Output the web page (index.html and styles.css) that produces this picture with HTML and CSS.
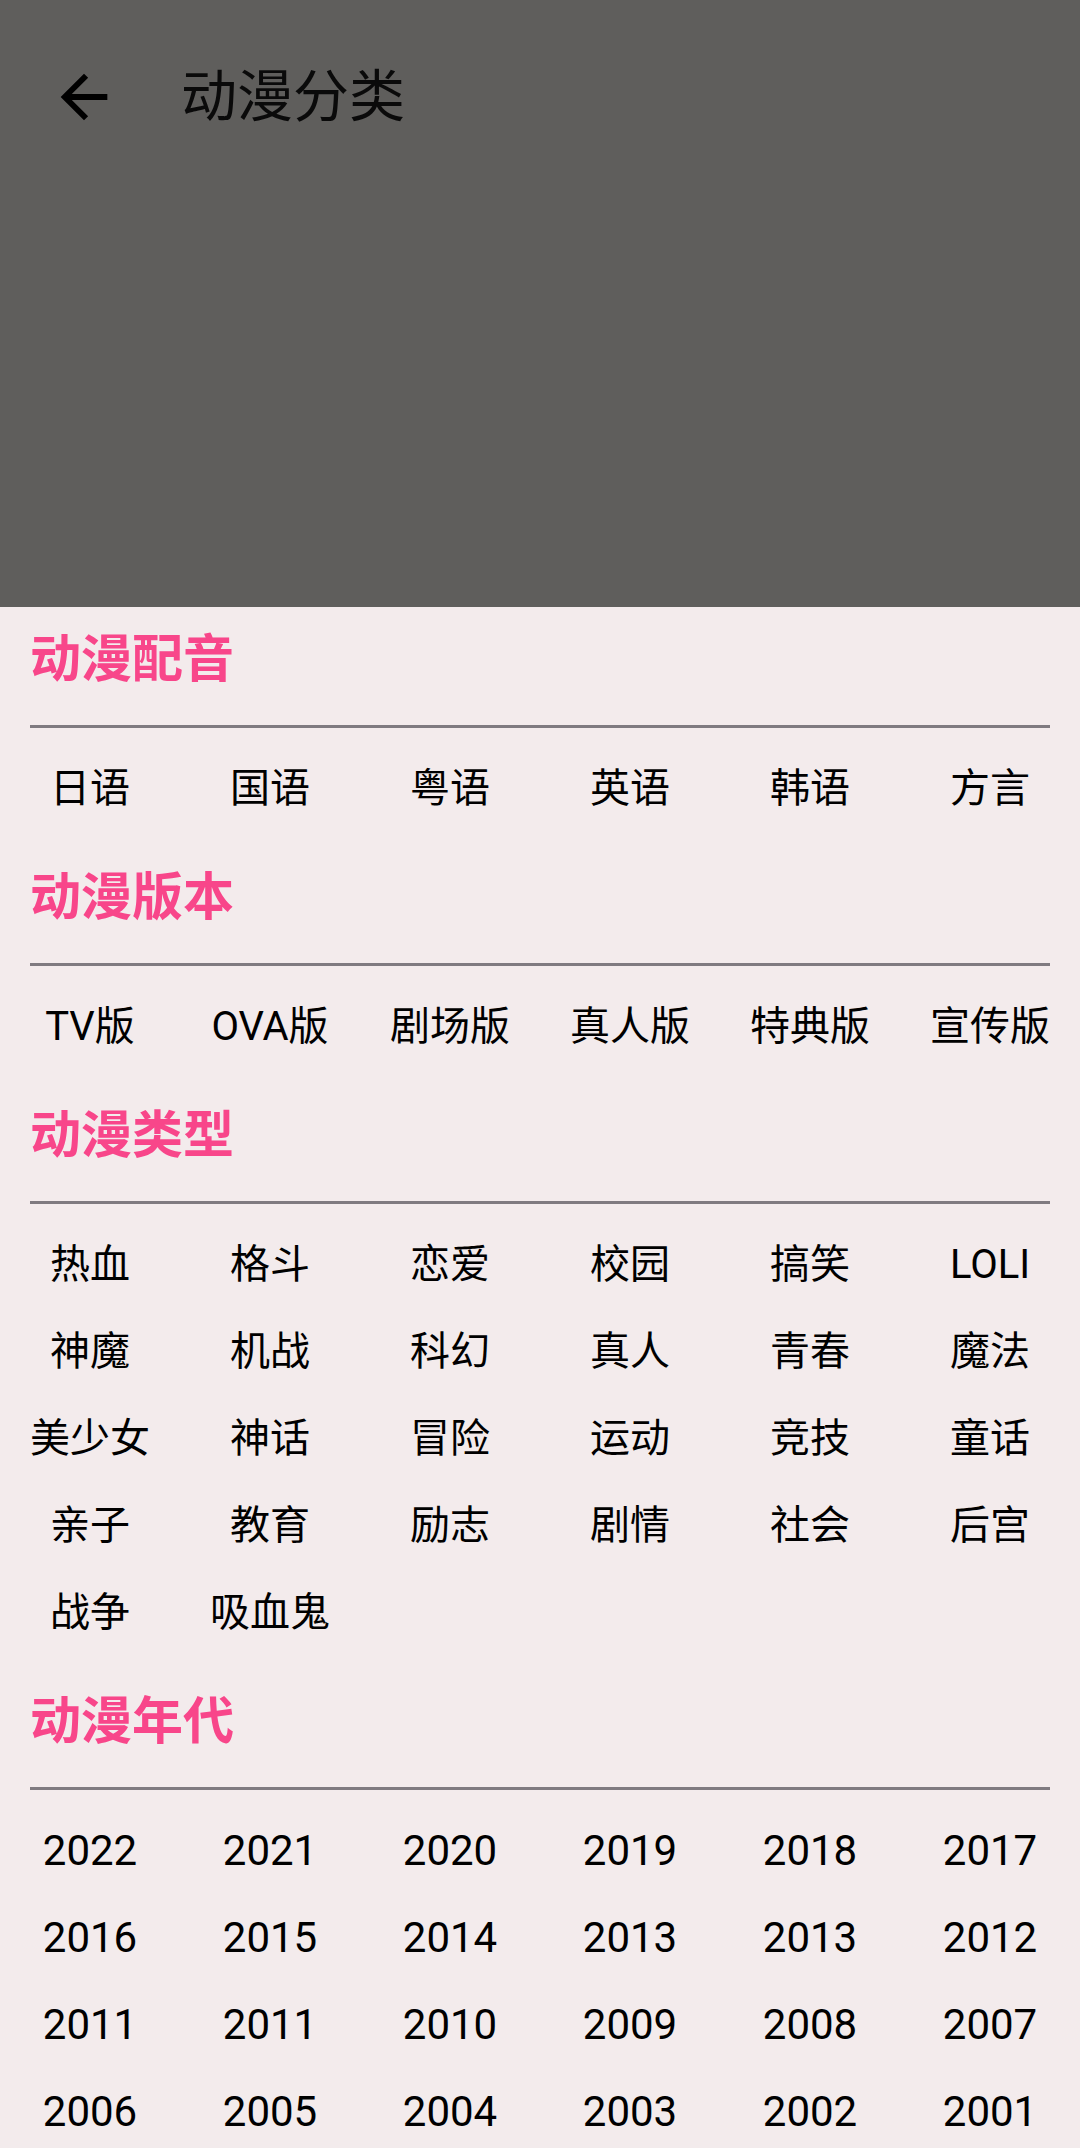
FILE: index.html
```html
<!DOCTYPE html>
<html lang="zh-CN">
<head>
<meta charset="utf-8">
<title>动漫分类</title>
<link rel="stylesheet" href="styles.css">
</head>
<body>
<header class="header">
  <div class="toolbar">
    <span class="back">
      <svg viewBox="0 0 24 24" width="70" height="70"><path d="M20 11H7.83l5.59-5.59L12 4l-8 8 8 8 1.41-1.41L7.83 13H20v-2z" fill="#000"/></svg>
    </span>
    <h1 class="title">动漫分类</h1>
  </div>
</header>
<main class="content">
  <section class="section">
    <h2 class="heading">动漫配音</h2>
    <hr class="divider">
    <div class="grid">
      <span class="cell">日语</span><span class="cell">国语</span><span class="cell">粤语</span><span class="cell">英语</span><span class="cell">韩语</span><span class="cell">方言</span>
    </div>
  </section>
  <section class="section">
    <h2 class="heading">动漫版本</h2>
    <hr class="divider">
    <div class="grid">
      <span class="cell">TV版</span><span class="cell">OVA版</span><span class="cell">剧场版</span><span class="cell">真人版</span><span class="cell">特典版</span><span class="cell">宣传版</span>
    </div>
  </section>
  <section class="section">
    <h2 class="heading">动漫类型</h2>
    <hr class="divider">
    <div class="grid">
      <span class="cell">热血</span><span class="cell">格斗</span><span class="cell">恋爱</span><span class="cell">校园</span><span class="cell">搞笑</span><span class="cell">LOLI</span>
      <span class="cell">神魔</span><span class="cell">机战</span><span class="cell">科幻</span><span class="cell">真人</span><span class="cell">青春</span><span class="cell">魔法</span>
      <span class="cell">美少女</span><span class="cell">神话</span><span class="cell">冒险</span><span class="cell">运动</span><span class="cell">竞技</span><span class="cell">童话</span>
      <span class="cell">亲子</span><span class="cell">教育</span><span class="cell">励志</span><span class="cell">剧情</span><span class="cell">社会</span><span class="cell">后宫</span>
      <span class="cell">战争</span><span class="cell">吸血鬼</span>
    </div>
  </section>
  <section class="section">
    <h2 class="heading">动漫年代</h2>
    <hr class="divider">
    <div class="grid years">
      <span class="cell">2022</span><span class="cell">2021</span><span class="cell">2020</span><span class="cell">2019</span><span class="cell">2018</span><span class="cell">2017</span>
      <span class="cell">2016</span><span class="cell">2015</span><span class="cell">2014</span><span class="cell">2013</span><span class="cell">2013</span><span class="cell">2012</span>
      <span class="cell">2011</span><span class="cell">2011</span><span class="cell">2010</span><span class="cell">2009</span><span class="cell">2008</span><span class="cell">2007</span>
      <span class="cell">2006</span><span class="cell">2005</span><span class="cell">2004</span><span class="cell">2003</span><span class="cell">2002</span><span class="cell">2001</span>
    </div>
  </section>
</main>
</body>
</html>
```
FILE: styles.css
```css
html {
  background: #f3ebec;
}
body {
  margin: 0;
  width: 1080px;
  background: #f3ebec;
  font-family: Roboto, "Noto Sans CJK SC", sans-serif;
  color: #000;
}
.header {
  height: 607px;
  background: #5f5e5c;
}
.toolbar {
  height: 194px;
  display: flex;
  align-items: center;
  padding-left: 49px;
}
.back {
  width: 70px;
  height: 70px;
  display: flex;
}
.title {
  margin: 0 0 0 62px;
  font-size: 56px;
  font-weight: 400;
  line-height: 70px;
  color: #0a0a0a;
}
.content {
  display: flex;
  flex-direction: column;
}
.section {
  margin-bottom: 13.5px;
}
.heading {
  margin: 0;
  padding-left: 30px;
  height: 106px;
  line-height: 106px;
  font-size: 51px;
  font-weight: 700;
  color: #f8468a;
}
.divider {
  margin: 12px 30px 16.5px 30px;
  height: 3px;
  border: 0;
  background: #7f7a80;
}
.grid {
  display: grid;
  grid-template-columns: repeat(6, 180px);
  grid-auto-rows: 87px;
}
.cell {
  font-size: 40px;
  line-height: 87px;
  text-align: center;
  white-space: nowrap;
}
.years .cell {
  font-size: 42px;
}
```
